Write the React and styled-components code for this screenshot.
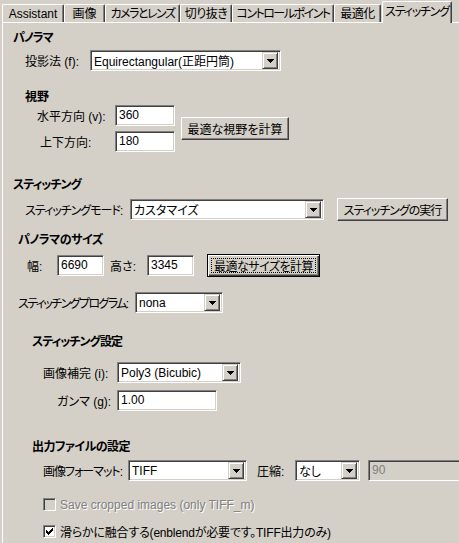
import React from "react";
import styled, { createGlobalStyle } from "styled-components";

const GlobalStyle = createGlobalStyle`
  body {
    margin: 0;
    background: #d4d0c8;
    font-family: "Liberation Sans", "Noto Sans CJK JP", sans-serif;
    font-size: 12px;
    color: #000;
    font-feature-settings: "palt";
  }
`;

const tabs = [
  { label: "Assistant", w: 62, ls: 0 },
  { label: "画像", w: 41, ls: 0 },
  { label: "カメラとレンズ", w: 75, ls: -1.5 },
  { label: "切り抜き", w: 52, ls: -0.5 },
  { label: "コントロールポイント", w: 102, ls: -1.5 },
  { label: "最適化", w: 47, ls: -0.5 },
  { label: "スティッチング", w: 70, ls: -1.2, active: true },
];

// --- Styled Components ---

const Window = styled.div`
  width: 459px;
  height: 543px;
  overflow: hidden;
  background: #d4d0c8;
`;

const TabBar = styled.div`
  display: flex;
  align-items: flex-end;
  height: 22px;
  padding-left: 2px;
`;

const Tab = styled.div`
  box-sizing: border-box;
  flex: none;
  width: ${(p) => p.$w}px;
  height: ${(p) => (p.$active ? 22 : 18)}px;
  margin-left: ${(p) => (p.$active ? 1 : 0)}px;
  margin-bottom: ${(p) => (p.$active ? -1 : 0)}px;
  position: relative;
  z-index: ${(p) => (p.$active ? 2 : 1)};
  background: #d4d0c8;
  border-top: 1px solid #fff;
  border-left: 1px solid #fff;
  border-right: 1px solid #404040;
  box-shadow: inset -1px 0 #808080;
  border-radius: 2px 2px 0 0;
  display: flex;
  justify-content: center;
  align-items: ${(p) => (p.$active ? "flex-start" : "center")};
  padding-top: ${(p) => (p.$active ? 3 : 0)}px;
  white-space: nowrap;
  line-height: 14px;
  letter-spacing: ${(p) => p.$ls}px;
`;

const Panel = styled.div`
  margin-left: 2px;
  height: 530px;
  border-top: 1px solid #fff;
  border-left: 1px solid #fff;
  display: flex;
  flex-direction: column;
`;

const Heading = styled.div`
  height: 16px;
  line-height: 16px;
  margin-top: ${(p) => p.$mt}px;
  padding-left: ${(p) => p.$pl}px;
  font-weight: bold;
  white-space: nowrap;
  letter-spacing: ${(p) => p.$ls || 0}px;
`;

const Row = styled.div`
  display: flex;
  align-items: center;
  height: ${(p) => p.$h || 21}px;
  margin-top: ${(p) => p.$mt || 0}px;
  padding-left: ${(p) => p.$pl}px;
  white-space: nowrap;
`;

const Label = styled.span`
  flex: none;
  width: ${(p) => p.$w}px;
  margin-left: ${(p) => p.$ml || 0}px;
  letter-spacing: ${(p) => p.$ls || 0}px;
`;

const FovGroup = styled.div`
  display: flex;
  align-items: center;
`;

const FovCol = styled.div`
  display: flex;
  flex-direction: column;
  gap: 5px;
`;

const sunken = `
  box-sizing: border-box;
  height: 21px;
  border: 1px solid;
  border-color: #808080 #fff #fff #808080;
  box-shadow: inset 1px 1px #404040, inset -1px -1px #d4d0c8;
`;

const Combo = styled.div`
  ${sunken}
  flex: none;
  width: ${(p) => p.$w}px;
  background: #fff;
  padding: 2px;
  display: flex;
  align-items: center;
`;

const ComboText = styled.span`
  flex: 1;
  padding-left: 1px;
  overflow: hidden;
  white-space: nowrap;
`;

const DropButton = styled.div`
  box-sizing: border-box;
  flex: none;
  width: 16px;
  height: 17px;
  background: #d4d0c8;
  border: 1px solid;
  border-color: #d4d0c8 #404040 #404040 #d4d0c8;
  box-shadow: inset 1px 1px #fff, inset -1px -1px #808080;
  display: flex;
  align-items: center;
  justify-content: center;
`;

const TextBox = styled.div`
  ${sunken}
  flex: none;
  width: ${(p) => p.$w}px;
  background: ${(p) => (p.$disabled ? "#d4d0c8" : "#fff")};
  color: ${(p) => (p.$disabled ? "#808080" : "#000")};
  padding: 0 3px;
  line-height: 19px;
  margin-left: ${(p) => p.$ml || 0}px;
  overflow: hidden;
`;

const Button = styled.div`
  box-sizing: border-box;
  flex: none;
  position: relative;
  width: ${(p) => p.$w}px;
  height: 23px;
  margin-left: ${(p) => p.$ml || 0}px;
  background: #d4d0c8;
  border: 1px solid;
  border-color: ${(p) =>
    p.$default ? "#000" : "#fff #404040 #404040 #fff"};
  box-shadow: ${(p) =>
    p.$default
      ? "inset 1px 1px #fff, inset -1px -1px #404040, inset -2px -2px #808080"
      : "inset -1px -1px #808080"};
  display: flex;
  align-items: center;
  justify-content: center;
  white-space: nowrap;
  letter-spacing: ${(p) => p.$ls || 0}px;

  &::after {
    content: "";
    display: ${(p) => (p.$default ? "block" : "none")};
    position: absolute;
    inset: 3px;
    border: 1px dotted #000;
  }
`;

const CheckRow = styled.div`
  display: flex;
  align-items: center;
  height: 17px;
  margin-top: ${(p) => p.$mt}px;
  padding-left: 40px;
  white-space: nowrap;
  gap: 4px;
  color: ${(p) => (p.$disabled ? "#808080" : "#000")};
  text-shadow: ${(p) => (p.$disabled ? "1px 1px #fff" : "none")};
  letter-spacing: ${(p) => p.$ls || 0}px;
`;

const CheckBox = styled.div`
  box-sizing: border-box;
  flex: none;
  width: 13px;
  height: 13px;
  border: 1px solid;
  border-color: #808080 #fff #fff #808080;
  box-shadow: inset 1px 1px #404040, inset -1px -1px #d4d0c8;
  background: ${(p) => (p.$disabled ? "#d4d0c8" : "#fff")};
  display: flex;
  align-items: center;
  justify-content: center;
`;

// --- Small drawings ---

const Arrow = () => (
  <svg width="7" height="4" viewBox="0 0 7 4" shapeRendering="crispEdges">
    <rect x="0" y="0" width="7" height="1" fill="#000" />
    <rect x="1" y="1" width="5" height="1" fill="#000" />
    <rect x="2" y="2" width="3" height="1" fill="#000" />
    <rect x="3" y="3" width="1" height="1" fill="#000" />
  </svg>
);

const checkPixels = [
  [6, 0, 1],
  [5, 1, 2],
  [0, 2, 1],
  [4, 2, 3],
  [0, 3, 2],
  [3, 3, 3],
  [0, 4, 5],
  [1, 5, 3],
  [2, 6, 1],
];

const Check = () => (
  <svg width="7" height="7" viewBox="0 0 7 7" shapeRendering="crispEdges">
    {checkPixels.map(([x, y, w]) => (
      <rect key={`${x}-${y}`} x={x} y={y} width={w} height="1" fill="#000" />
    ))}
  </svg>
);

const Select = ({ w, children }) => (
  <Combo $w={w}>
    <ComboText>{children}</ComboText>
    <DropButton>
      <Arrow />
    </DropButton>
  </Combo>
);

// --- Component ---
export default function App() {
  return (
    <Window>
      <GlobalStyle />
      <TabBar>
        {tabs.map((t) => (
          <Tab key={t.label} $w={t.w} $ls={t.ls} $active={t.active}>
            {t.label}
          </Tab>
        ))}
      </TabBar>

      <Panel>
        <Heading $mt={7} $pl={10} $ls={-1}>パノラマ</Heading>
        <Row $mt={4} $pl={22}>
          <Label $w={65}>投影法 (f):</Label>
          <Select w={191}>Equirectangular(正距円筒)</Select>
        </Row>

        <Heading $mt={18} $pl={22}>視野</Heading>
        <FovGroup>
          <FovCol>
            <Row $pl={34}>
              <Label $w={78}>水平方向 (v):</Label>
              <TextBox $w={60}>360</TextBox>
            </Row>
            <Row $pl={37}>
              <Label $w={75}>上下方向:</Label>
              <TextBox $w={60}>180</TextBox>
            </Row>
          </FovCol>
          <Button $w={108} $ml={6}>最適な視野を計算</Button>
        </FovGroup>

        <Heading $mt={25} $pl={10} $ls={-1}>スティッチング</Heading>
        <Row $h={23} $mt={5} $pl={22}>
          <Label $w={105} $ls={-1}>スティッチングモード:</Label>
          <Select w={194}>カスタマイズ</Select>
          <Button $w={111} $ml={13} $ls={-1}>スティッチングの実行</Button>
        </Row>

        <Heading $mt={11} $pl={15} $ls={-0.5}>パノラマのサイズ</Heading>
        <Row $h={23} $mt={6} $pl={24}>
          <Label $w={30}>幅:</Label>
          <TextBox $w={47}>6690</TextBox>
          <Label $w={37} $ml={6}>高さ:</Label>
          <TextBox $w={47}>3345</TextBox>
          <Button $w={113} $ml={13} $ls={-0.5} $default>最適なサイズを計算</Button>
        </Row>

        <Row $mt={15} $pl={15}>
          <Label $w={117} $ls={-1.6}>スティッチングプログラム:</Label>
          <Select w={88}>nona</Select>
        </Row>

        <Heading $mt={21} $pl={29} $ls={-1}>スティッチング設定</Heading>
        <Row $mt={12} $pl={40}>
          <Label $w={74}>画像補完 (i):</Label>
          <Select w={124}>Poly3 (Bicubic)</Select>
        </Row>
        <Row $mt={7} $pl={54}>
          <Label $w={60}>ガンマ (g):</Label>
          <TextBox $w={100}>1.00</TextBox>
        </Row>

        <Heading $mt={28} $pl={29} $ls={-0.5}>出力ファイルの設定</Heading>
        <Row $mt={5} $pl={40}>
          <Label $w={85} $ls={-1}>画像フォーマット:</Label>
          <Select w={119}>TIFF</Select>
          <Label $w={38} $ml={10}>圧縮:</Label>
          <Select w={65}>なし</Select>
          <TextBox $w={110} $ml={8} $disabled>90</TextBox>
        </Row>

        <CheckRow $mt={15} $disabled>
          <CheckBox $disabled />
          Save cropped images (only TIFF_m)
        </CheckRow>
        <CheckRow $mt={10} $ls={-0.2}>
          <CheckBox>
            <Check />
          </CheckBox>
          滑らかに融合する(enblendが必要です。TIFF出力のみ)
        </CheckRow>
      </Panel>
    </Window>
  );
}
